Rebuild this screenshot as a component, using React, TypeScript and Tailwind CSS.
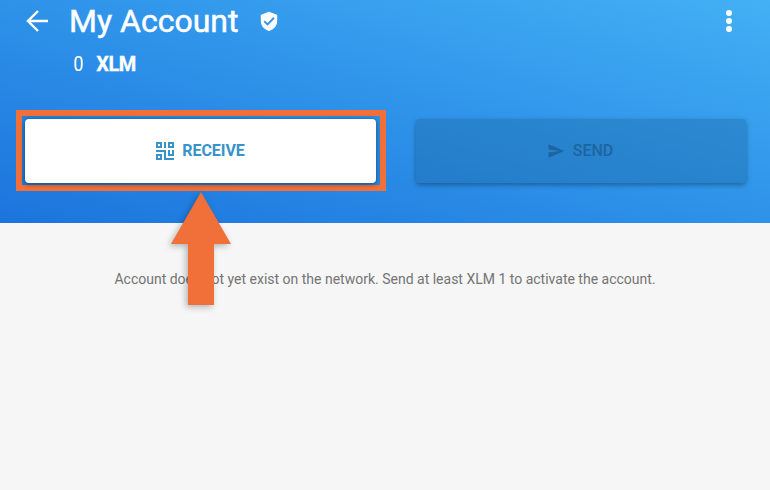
const font = "font-['Roboto','Liberation_Sans',sans-serif]";

function BackIcon() {
  return (
    <svg className="h-8 w-8 shrink-0" viewBox="0 0 32 32" fill="none" stroke="#fff" strokeWidth="2.4">
      <path d="M27 16H7.5M17 6L7 16l10 10" />
    </svg>
  );
}

function ShieldIcon() {
  return (
    <svg className="h-[20px] w-[18px] shrink-0" viewBox="0 0 18 20" fill="none">
      <path
        d="M9 1.2L16.6 4.2V10c0 4.2-3.2 7.9-7.6 9.4C4.6 17.9 1.4 14.2 1.4 10V4.2z"
        fill="#fff"
        stroke="#fff"
        strokeWidth="1.2"
        strokeLinejoin="round"
      />
      <path d="M4.2 10.2L7.6 13.4L14 6.8" stroke="#3796eb" strokeWidth="2" />
    </svg>
  );
}

function QrIcon() {
  return (
    <svg className="h-[18px] w-[18px] shrink-0" viewBox="0 0 18 18" fill="none" stroke="currentColor" strokeWidth="2">
      <path d="M1 1h4v4H1zM13 1h4v4h-4zM1 13h4v4H1zM9 0v6M0 9h9v8h9M13 8v5h4V8" />
    </svg>
  );
}

function SendIcon() {
  return (
    <svg className="h-[18px] w-[18px] shrink-0" viewBox="0 0 24 24" fill="currentColor">
      <path d="M2.01 21L23 12 2.01 3 2 10l15 2-15 2z" />
    </svg>
  );
}

export default function App() {
  return (
    <div className={`relative h-[490px] w-[770px] overflow-hidden bg-[#f6f6f6] ${font}`}>
      <header className="h-[223px] bg-linear-to-bl from-[#43b0f5] to-[#1c74dc] text-white">
        <div className="flex h-[42px] items-center pl-[21px]">
          <BackIcon />
          <h1 className="ml-4 text-[32px] leading-[42px] [-webkit-text-stroke:0.5px_white]">My Account</h1>
          <div className="ml-[22px]">
            <ShieldIcon />
          </div>
          <div className="mr-[38px] ml-auto flex flex-col gap-[2px]">
            <span className="h-[6px] w-[6px] rounded-full bg-white" />
            <span className="h-[6px] w-[6px] rounded-full bg-white" />
            <span className="h-[6px] w-[6px] rounded-full bg-white" />
          </div>
        </div>
        <div className="flex h-[44px] items-center pl-[73px] text-[20px]">
          <span className="inline-block scale-x-90 [-webkit-text-stroke:0.1px_white]">0</span>
          <span className="ml-3 font-bold tracking-[-0.5px] [-webkit-text-stroke:0.3px_white]">XLM</span>
        </div>
        <div className="flex gap-[30px] pt-6 pl-4">
          <div className="h-[81px] w-[370px] border-[6px] border-[#f16f38] p-[3px]">
            <button className="flex h-[64px] w-[351px] items-center justify-center gap-2 rounded-[4px] bg-white text-[16px] font-bold text-[#3893c8] shadow-[0_1px_4px_1px_rgba(0,0,0,0.35)]">
              <QrIcon />
              <span className="tracking-[-0.05px]">RECEIVE</span>
            </button>
          </div>
          <button className="mt-[9px] flex h-[64px] w-[330px] items-center justify-center gap-2 rounded-[4px] bg-[#1f68a4]/40 pr-[2px] text-[16px] font-medium text-[#1e659f] shadow-[0_2px_5px_0_rgba(0,0,0,0.35)]">
            <SendIcon />
            <span>SEND</span>
          </button>
        </div>
      </header>
      <p className="pt-[46px] text-center text-[14px] leading-5 text-[#747474]">
        Account does not yet exist on the network. Send at least XLM 1 to activate the account.
      </p>
      <svg
        className="absolute top-[192px] left-[171px] overflow-visible drop-shadow-[-2px_2px_3px_rgba(0,0,0,0.28)]"
        width="60"
        height="113"
        viewBox="0 0 60 113"
      >
        <path d="M30 0L60 52H43v61H17V52H0z" fill="#f16f38" />
      </svg>
    </div>
  );
}
